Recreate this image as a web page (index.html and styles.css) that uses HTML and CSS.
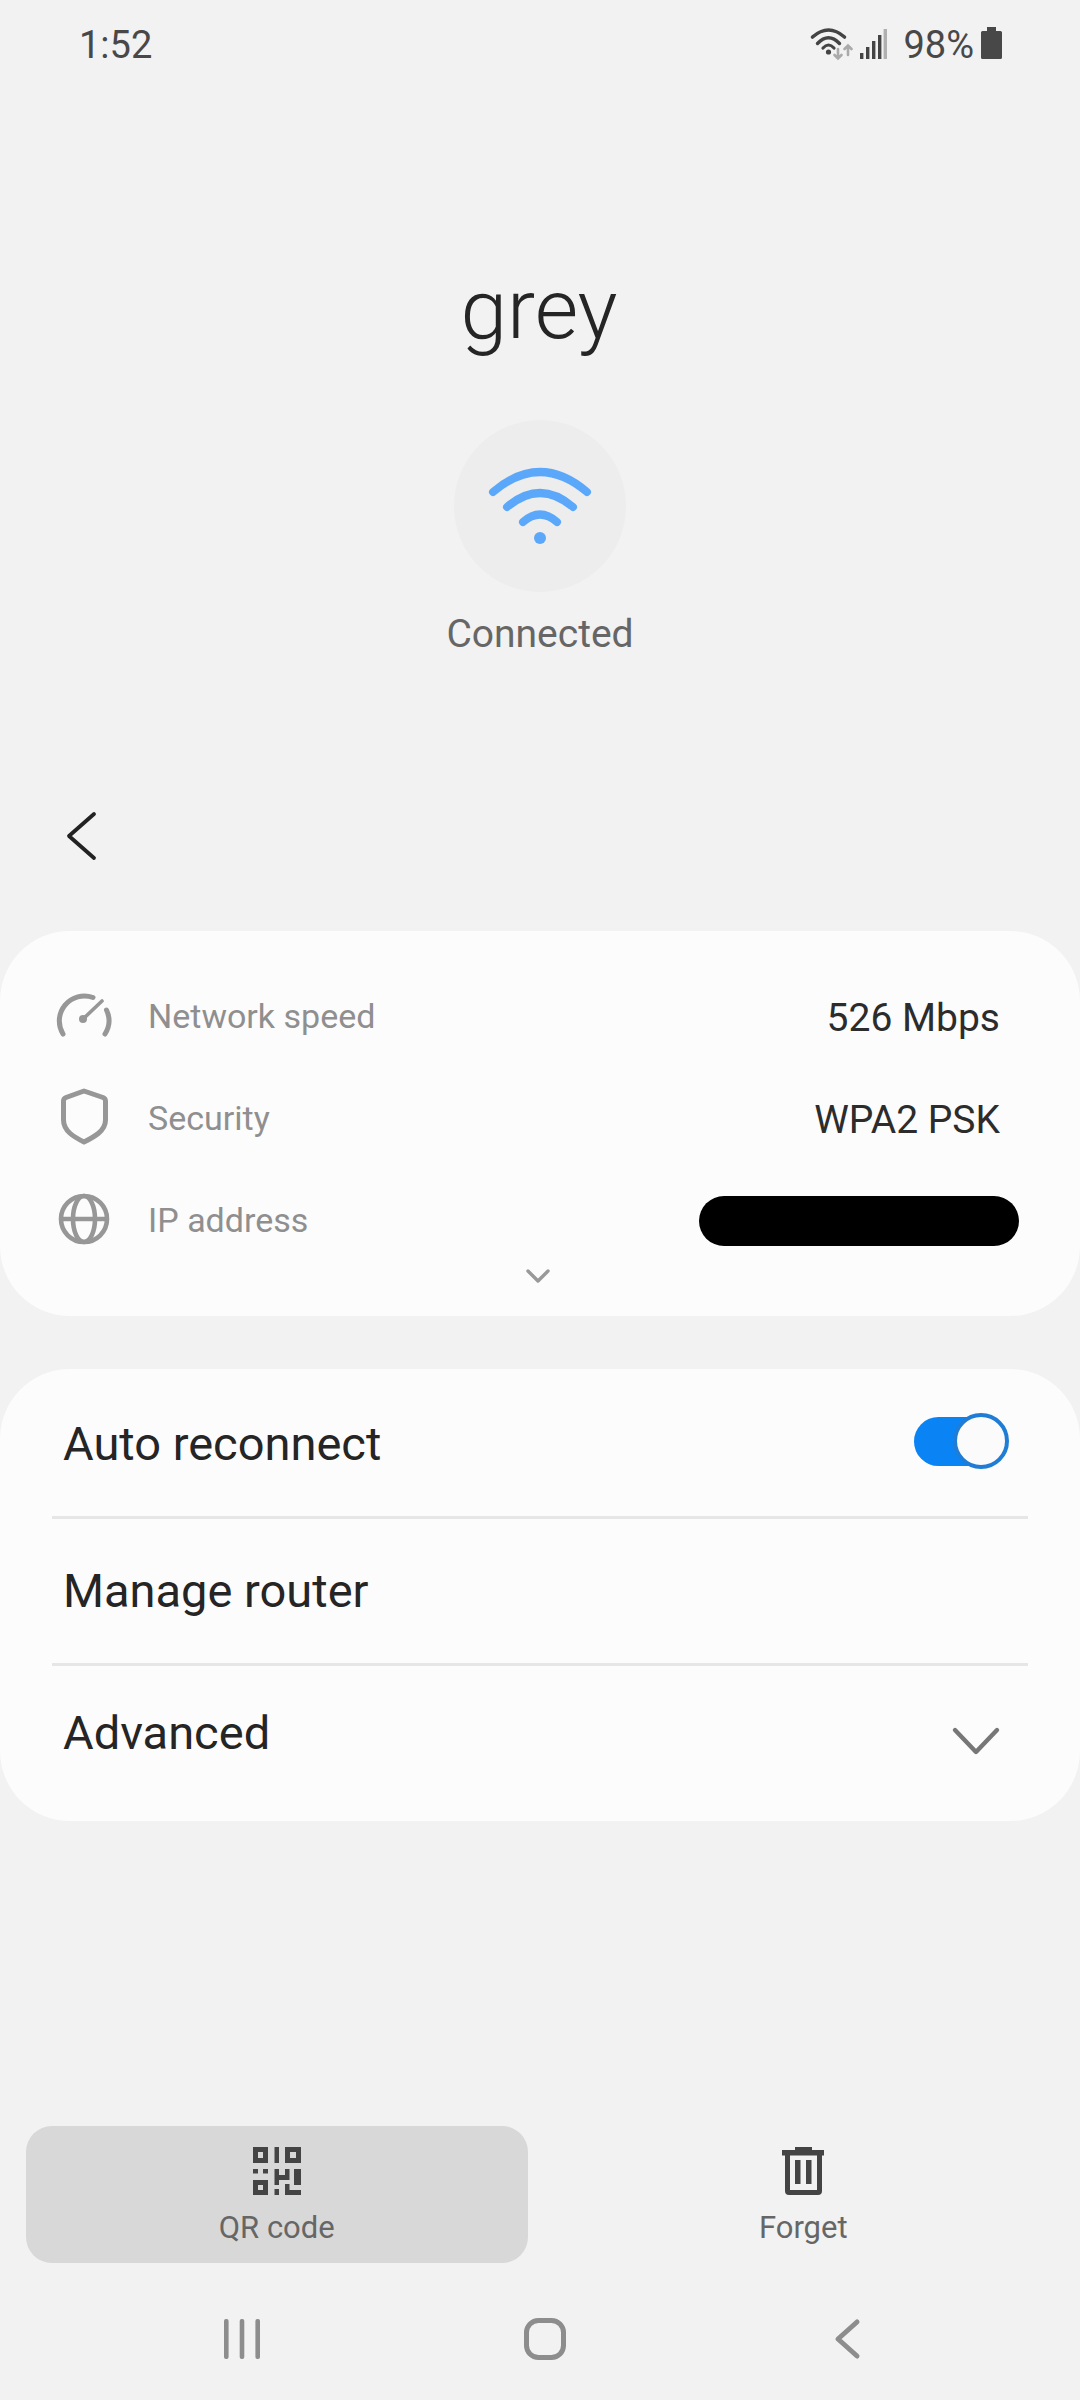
FILE: index.html
```html
<!DOCTYPE html>
<html lang="en">
<head>
    <meta charset="UTF-8">
    <meta name="viewport" content="width=device-width, initial-scale=1.0">
    <title>Wi-Fi network details</title>
    <link rel="stylesheet" href="styles.css">
</head>
<body>
    <div class="screen">
        <!-- Status bar -->
        <div class="status-bar">
            <span class="status-time">1:52</span>
            <div class="status-icons">
                <svg class="status-wifi" width="41" height="44" viewBox="0 0 41 44" fill="none" stroke-linecap="round">
                    <path d="M1.5 14Q17.5 0 33.5 14" stroke="#444" stroke-width="3.6"/>
                    <path d="M6.5 20.5Q17.5 9 28.5 20.5" stroke="#444" stroke-width="3.4"/>
                    <path d="M12 25Q17.5 19 23 25" stroke="#444" stroke-width="3.2"/>
                    <circle cx="17.5" cy="29" r="2.6" fill="#444"/>
                    <path d="M27 26V35M23.5 32L27 35.5L30.5 32" stroke="#aaa" stroke-width="2.6"/>
                    <path d="M37 32V23M33.5 26L37 22.5L40.5 26" stroke="#aaa" stroke-width="2.6"/>
                </svg>
                <svg class="status-signal" width="27" height="44" viewBox="0 0 27 44">
                    <rect x="0" y="30" width="3.4" height="6" fill="#444"/>
                    <rect x="6" y="24" width="3.4" height="12" fill="#444"/>
                    <rect x="12" y="18" width="3.4" height="18" fill="#444"/>
                    <rect x="18" y="12" width="3.4" height="24" fill="#444"/>
                    <rect x="23.6" y="6" width="3.4" height="30" fill="#b0b0b0"/>
                </svg>
                <span class="status-battery-text">98%</span>
                <svg class="status-battery" width="21" height="44" viewBox="0 0 21 44">
                    <path d="M6 4H15V8H19.5Q21 8 21 9.5V34.5Q21 36 19.5 36H1.5Q0 36 0 34.5V9.5Q0 8 1.5 8H6Z" fill="#484848"/>
                </svg>
            </div>
        </div>

        <!-- Network name and state -->
        <div class="hero">
            <h1 class="network-name">grey</h1>
            <div class="wifi-circle">
                <svg width="172" height="172" viewBox="0 0 172 172" fill="none" stroke="#5ba8fb" stroke-width="8" stroke-linecap="round">
                    <path d="M39 72Q86 32 133 72"/>
                    <path d="M53 87Q86 59 119 87"/>
                    <path d="M69 102Q86 87 103 102"/>
                    <circle cx="86" cy="118" r="6" fill="#5ba8fb" stroke="none"/>
                </svg>
            </div>
            <div class="network-state">Connected</div>
        </div>

        <svg class="back-arrow" width="30" height="48" viewBox="0 0 30 48" fill="none" stroke="#222" stroke-width="3.8" stroke-linecap="round" stroke-linejoin="round">
            <path d="M29 2L4 24L29 46"/>
        </svg>

        <!-- Network info card -->
        <div class="card info-card">
            <div class="info-row">
                <svg class="info-icon" width="56" height="56" viewBox="0 0 56 56" fill="none" stroke="#979797" stroke-width="5" stroke-linecap="round">
                    <path d="M7 46A25 25 0 0 1 37 9.5"/>
                    <path d="M50.5 22A25 25 0 0 1 49 46"/>
                    <path d="M27 31L46 13" stroke-width="3.6"/>
                    <circle cx="27" cy="31" r="4" fill="#979797" stroke="none"/>
                </svg>
                <span class="info-label">Network speed</span>
                <span class="info-value">526 Mbps</span>
            </div>
            <div class="info-row">
                <svg class="info-icon" width="56" height="56" viewBox="0 0 56 56" fill="none" stroke="#979797" stroke-width="5" stroke-linejoin="round">
                    <path d="M28 1L47 7.5Q49.5 8.5 49.5 11V30C49.5 41 38 47 28 52C18 47 7.5 41 7.5 30V11Q7.5 8.5 10 7.5Z"/>
                </svg>
                <span class="info-label">Security</span>
                <span class="info-value">WPA2 PSK</span>
            </div>
            <div class="info-row">
                <svg class="info-icon" width="56" height="56" viewBox="0 0 56 56" fill="none" stroke="#979797" stroke-width="4.6">
                    <circle cx="28" cy="27" r="23"/>
                    <ellipse cx="28" cy="27" rx="11" ry="23"/>
                    <path d="M5 27H51"/>
                </svg>
                <span class="info-label">IP address</span>
                <span class="redacted"></span>
            </div>
            <svg class="more-arrow" width="26" height="16" viewBox="0 0 26 16" fill="none" stroke="#999" stroke-width="3.4" stroke-linecap="round" stroke-linejoin="round">
                <path d="M3 3L13 13L23 3"/>
            </svg>
        </div>

        <!-- Options card -->
        <div class="card options-card">
            <div class="option-row option-auto">
                <span class="option-label">Auto reconnect</span>
                <div class="toggle">
                    <div class="toggle-track"></div>
                    <div class="toggle-thumb"></div>
                </div>
            </div>
            <div class="option-row option-router">
                <span class="option-label">Manage router</span>
            </div>
            <div class="option-row option-advanced">
                <span class="option-label">Advanced</span>
                <svg class="advanced-arrow" width="48" height="30" viewBox="0 0 48 30" fill="none" stroke="#777" stroke-width="4.4" stroke-linecap="round" stroke-linejoin="round">
                    <path d="M3 4L24 26L45 4"/>
                </svg>
            </div>
        </div>

        <!-- Bottom actions -->
        <div class="actions">
            <div class="action action-selected">
                <svg width="48" height="48" viewBox="0 0 48 48" fill="#444">
                    <path fill-rule="evenodd" d="M0 0H15V16H0ZM5 5V11H10V5Z"/>
                    <rect x="21.5" y="0" width="4.5" height="16"/>
                    <path fill-rule="evenodd" d="M32 0H48V16H32ZM37 5V11H43V5Z"/>
                    <rect x="0" y="22" width="5" height="4.5"/>
                    <rect x="10" y="22" width="5" height="4.5"/>
                    <path fill-rule="evenodd" d="M0 33H15V48H0ZM5 38V43H10V38Z"/>
                    <path d="M21.5 22H26V28H32V22H36.5V33H26V38H21.5Z"/>
                    <rect x="41" y="22" width="7" height="16"/>
                    <rect x="21.5" y="42" width="4.5" height="6"/>
                    <path d="M32 37H36.5V43H48V48H32Z"/>
                </svg>
                <span class="action-label">QR code</span>
            </div>
            <div class="action">
                <svg width="42" height="48" viewBox="0 0 42 48" fill="#444">
                    <path d="M13 0H30V3H42V8.5H0V3H13Z"/>
                    <path fill-rule="evenodd" d="M3 8H40V44Q40 48 36 48H7Q3 48 3 44ZM8 8V43H35V8Z"/>
                    <rect x="13" y="13" width="5.5" height="24"/>
                    <rect x="24" y="13" width="5.5" height="24"/>
                </svg>
                <span class="action-label">Forget</span>
            </div>
        </div>

        <!-- Navigation bar -->
        <div class="nav-bar">
            <svg width="42" height="42" viewBox="0 0 42 42" fill="#8d8d8d">
                <rect x="3" y="1" width="4.6" height="40" rx="2"/>
                <rect x="18.7" y="1" width="4.6" height="40" rx="2"/>
                <rect x="34.4" y="1" width="4.6" height="40" rx="2"/>
            </svg>
            <svg width="42" height="42" viewBox="0 0 42 42" fill="none" stroke="#8d8d8d" stroke-width="5">
                <rect x="2.5" y="2.5" width="37" height="37" rx="12"/>
            </svg>
            <svg width="42" height="42" viewBox="0 0 42 42" fill="none" stroke="#8d8d8d" stroke-width="5" stroke-linecap="round" stroke-linejoin="round">
                <path d="M30 4L11 21L30 38"/>
            </svg>
        </div>
    </div>
</body>
</html>
```

FILE: styles.css
```css
* {
    margin: 0;
    padding: 0;
    box-sizing: border-box;
    font-family: Roboto, 'Noto Sans', sans-serif;
}

body {
    background: #f2f2f2;
}

svg {
    display: block;
    flex-shrink: 0;
    overflow: visible;
}

.screen {
    width: 1080px;
    height: 2400px;
    display: flex;
    flex-direction: column;
    background: #f2f2f2;
    overflow: hidden;
}

/* Status bar */
.status-bar {
    display: flex;
    justify-content: space-between;
    align-items: center;
    padding: 23px 78px 0 79px;
    font-size: 38px;
    line-height: 44px;
    color: #484848;
}

.status-icons {
    display: flex;
    align-items: center;
}

.status-signal {
    margin-left: 8px;
}

.status-battery-text {
    margin-left: 16px;
}

.status-battery {
    margin-left: 7px;
}

/* Hero */
.hero {
    display: flex;
    flex-direction: column;
    align-items: center;
    padding-top: 193px;
}

.network-name {
    margin-right: 2px;
    font-size: 84px;
    line-height: 100px;
    font-weight: 300;
    color: #252525;
}

.wifi-circle {
    width: 172px;
    height: 172px;
    margin-top: 60px;
    border-radius: 50%;
    background: #ededed;
}

.network-state {
    margin-top: 17px;
    font-size: 39px;
    line-height: 50px;
    color: #666;
}

.back-arrow {
    margin: 153px 0 71px 65px;
}

/* Cards */
.card {
    background: #fcfcfc;
    border-radius: 70px;
}

.info-card {
    height: 385px;
    padding: 34px 80px 0 56px;
}

.info-row {
    height: 102px;
    display: flex;
    align-items: center;
}

.info-label {
    margin-left: 36px;
    font-size: 34px;
    line-height: 44px;
    color: #8f8f8f;
}

.info-value {
    margin: 4px 0 0 auto;
    font-size: 39px;
    line-height: 44px;
    color: #2c2c2c;
}

.redacted {
    width: 320px;
    height: 50px;
    margin: 1px -19px 0 auto;
    border-radius: 25px;
    background: #000;
}

.more-arrow {
    margin: -3px 0 0 469px;
}

.options-card {
    height: 452px;
    margin-top: 53px;
    padding: 0 52px;
}

.option-row {
    display: flex;
    align-items: center;
    justify-content: space-between;
    padding-left: 11px;
}

.option-auto {
    padding: 47px 19px 44px 11px;
    border-bottom: 3px solid #e6e6e6;
}

.option-router {
    padding-top: 44px;
    padding-bottom: 44px;
    border-bottom: 3px solid #e6e6e6;
}

.option-advanced {
    padding: 39px 28px 0 11px;
}

.option-label {
    font-size: 47px;
    line-height: 56px;
    color: #252525;
}

.advanced-arrow {
    margin-top: 16px;
}

/* Toggle */
.toggle {
    position: relative;
    width: 95px;
    height: 56px;
    margin-top: -6px;
}

.toggle-track {
    position: absolute;
    left: 0;
    top: 4px;
    width: 80px;
    height: 49px;
    border-radius: 25px;
    background: #0a84f5;
}

.toggle-thumb {
    position: absolute;
    right: 0;
    top: 0;
    width: 56px;
    height: 56px;
    border: 4px solid #1f7dd6;
    border-radius: 50%;
    background: #fbfbfb;
}

/* Bottom actions */
.actions {
    display: flex;
    gap: 25px;
    margin-top: auto;
    padding: 0 26px;
}

.action {
    flex: 1;
    height: 137px;
    display: flex;
    flex-direction: column;
    align-items: center;
    padding-top: 21px;
    border-radius: 26px;
}

.action-selected {
    background: #d8d8d8;
}

.action-label {
    margin-top: 13px;
    font-size: 31px;
    line-height: 40px;
    color: #666;
}

/* Navigation bar */
.nav-bar {
    height: 137px;
    display: grid;
    grid-template-columns: repeat(3, 303px);
    justify-items: center;
    padding: 55px 0 0 90px;
}
```
